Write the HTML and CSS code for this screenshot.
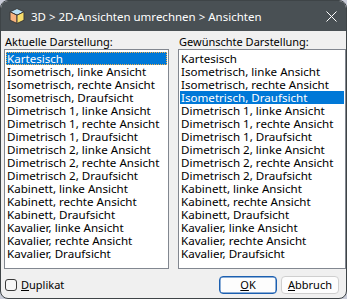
FILE: index.html
```html
<!DOCTYPE html>
<html lang="de">
  <head>
    <meta charset="UTF-8">
    <title>Ansichten</title>
    <link rel="stylesheet" href="styles.css">
  </head>
  <body>

<div class="window">
  <div class="titlebar">
    <svg class="app-icon" width="18" height="18" viewBox="0 0 18 18">
      <path d="M9 1.5 L16 4.8 L9 8.2 L2 4.8 Z" fill="#b9e1f5" stroke="#3a3a3a" stroke-width="1" stroke-linejoin="round"/>
      <path d="M2 4.8 L9 8.2 L9 16.5 L2 13.2 Z" fill="#f6b27e" stroke="#3a3a3a" stroke-width="1" stroke-linejoin="round"/>
      <path d="M16 4.8 L9 8.2 L9 16.5 L16 13.2 Z" fill="#f7dd6a" stroke="#3a3a3a" stroke-width="1" stroke-linejoin="round"/>
    </svg>
    <span class="title">3D &gt; 2D-Ansichten umrechnen &gt; Ansichten</span>
    <svg class="close" width="11" height="11" viewBox="0 0 11 11">
      <path d="M0.5 0.5 L10.5 10.5 M10.5 0.5 L0.5 10.5" stroke="#fff" stroke-width="1"/>
    </svg>
  </div>

  <div class="content">
    <div class="columns">
      <div class="column">
        <div class="caption">Aktuelle Darstellung:</div>
        <ul class="listbox">
          <li class="selected focused">Kartesisch</li>
          <li>Isometrisch, linke Ansicht</li>
          <li>Isometrisch, rechte Ansicht</li>
          <li>Isometrisch, Draufsicht</li>
          <li>Dimetrisch 1, linke Ansicht</li>
          <li>Dimetrisch 1, rechte Ansicht</li>
          <li>Dimetrisch 1, Draufsicht</li>
          <li>Dimetrisch 2, linke Ansicht</li>
          <li>Dimetrisch 2, rechte Ansicht</li>
          <li>Dimetrisch 2, Draufsicht</li>
          <li>Kabinett, linke Ansicht</li>
          <li>Kabinett, rechte Ansicht</li>
          <li>Kabinett, Draufsicht</li>
          <li>Kavalier, linke Ansicht</li>
          <li>Kavalier, rechte Ansicht</li>
          <li>Kavalier, Draufsicht</li>
        </ul>
      </div>
      <div class="column">
        <div class="caption">Gewünschte Darstellung:</div>
        <ul class="listbox">
          <li>Kartesisch</li>
          <li>Isometrisch, linke Ansicht</li>
          <li>Isometrisch, rechte Ansicht</li>
          <li class="selected">Isometrisch, Draufsicht</li>
          <li>Dimetrisch 1, linke Ansicht</li>
          <li>Dimetrisch 1, rechte Ansicht</li>
          <li>Dimetrisch 1, Draufsicht</li>
          <li>Dimetrisch 2, linke Ansicht</li>
          <li>Dimetrisch 2, rechte Ansicht</li>
          <li>Dimetrisch 2, Draufsicht</li>
          <li>Kabinett, linke Ansicht</li>
          <li>Kabinett, rechte Ansicht</li>
          <li>Kabinett, Draufsicht</li>
          <li>Kavalier, linke Ansicht</li>
          <li>Kavalier, rechte Ansicht</li>
          <li>Kavalier, Draufsicht</li>
        </ul>
      </div>
    </div>

    <div class="footer">
      <label class="check"><span class="box"></span><span><u>D</u>uplikat</span></label>
      <div class="buttons">
        <button class="button default"><u>O</u>K</button>
        <button class="button"><u>A</u>bbruch</button>
      </div>
    </div>
  </div>
</div>

  </body>
</html>
```

FILE: styles.css
```css
*, ::before, ::after { box-sizing: border-box; }

html, body {
  margin: 0;
  background: #c9ccd8;
}
body {
  font-family: "Noto Sans", "Open Sans", sans-serif;
  font-size: 11px;
  color: #000;
}

.window {
  width: 347px;
  height: 299px;
  border: 1px solid #3e4447;
  border-radius: 8px;
  background: #f0f0f0;
  overflow: hidden;
  display: flex;
  flex-direction: column;
}

.titlebar {
  height: 30px;
  background: #495054;
  color: #fff;
  display: flex;
  align-items: center;
  padding: 0 9px 0 7px;
}
.app-icon { margin-right: 5px; }
.title {
  flex: 1;
  font-size: 11.5px;
  padding-top: 1px;
}

.content {
  flex: 1;
  display: flex;
  flex-direction: column;
  padding: 0 1px 0 3px;
}

.columns {
  display: grid;
  grid-template-columns: 165px 168px;
  column-gap: 9px;
}

.caption {
  height: 18px;
  line-height: 14px;
  padding-top: 4px;
  padding-left: 1px;
}

.listbox {
  list-style: none;
  margin: 0;
  padding: 2px 1px;
  height: 220px;
  background: #fff;
  border: 1px solid #828790;
  font-size: 11.6px;
}
.listbox li {
  height: 13px;
  line-height: 13px;
  padding-left: 1px;
  white-space: nowrap;
}
.listbox .selected {
  background: #0078d7;
  color: #fff;
}
.listbox .focused {
  outline: 1px dotted #f3b04a;
  outline-offset: -1px;
}

.footer {
  flex: 1;
  display: flex;
  align-items: center;
  justify-content: space-between;
  padding: 2px 6px 0 1px;
}

.check {
  display: flex;
  align-items: center;
  gap: 4px;
}
.box {
  width: 12px;
  height: 12px;
  border: 1px solid #3a3a3a;
  border-radius: 3px;
  background: #f7f7f7;
}

.buttons {
  display: flex;
  gap: 4px;
}
.button {
  flex: none;
  font: inherit;
  color: #000;
  width: 58px;
  height: 18px;
  padding: 0;
  line-height: 14px;
  background: #fdfdfd;
  border: 1px solid #cfcfcf;
  border-radius: 4px;
}
.button.default {
  border-color: #1b5fb0;
  box-shadow: inset 0 0 0 0.5px #1b5fb0;
}
```
